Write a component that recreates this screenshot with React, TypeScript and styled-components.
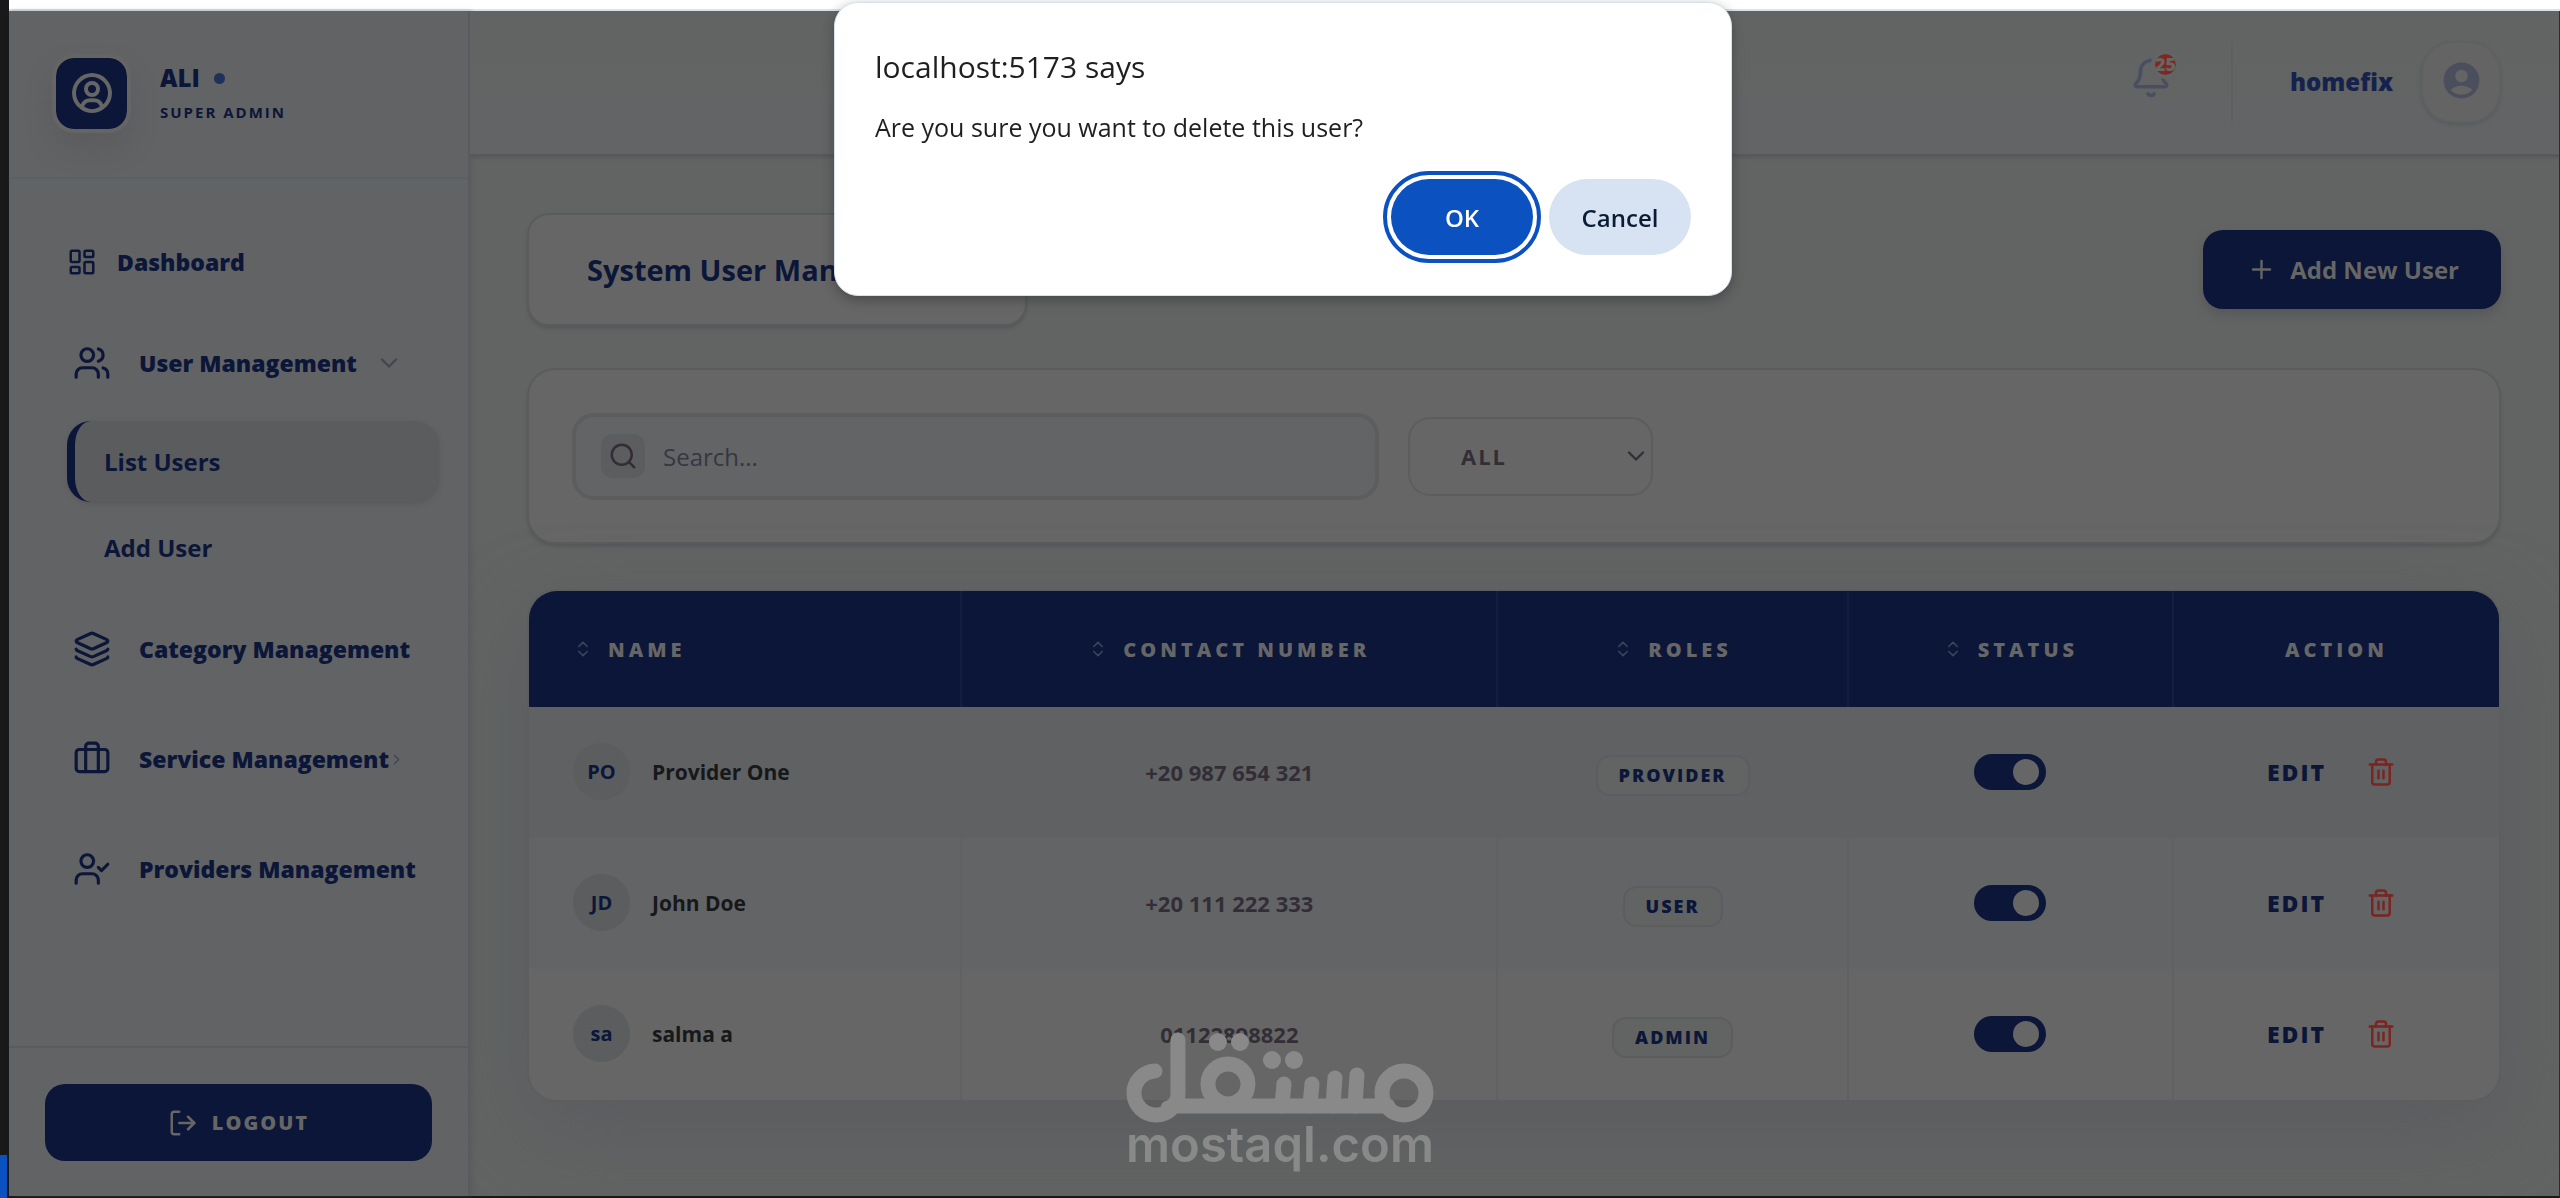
import React from "react";
import styled, { createGlobalStyle, css } from "styled-components";
import {
  Bell,
  Briefcase,
  ChevronDown,
  ChevronRight,
  ChevronsUpDown,
  Layers,
  LayoutDashboard,
  LogOut,
  Plus,
  Search,
  Trash2,
  UserCheck,
  Users,
} from "lucide-react";
import { BiUserCircle } from "react-icons/bi";
import { MdAccountCircle } from "react-icons/md";

const color = {
  navy: "#0b1638",
  paper: "#666666",
  sidebar: "#626365",
  page: "#626463",
  line: "#5a5b5d",
  soft: "#5c5d5f",
  ink: "#17181a",
  muted: "#332e36",
  danger: "#7a251f",
};

const GlobalStyle = createGlobalStyle`
  *, *::before, *::after { box-sizing: border-box; }
  body {
    margin: 0;
    background: ${color.page};
    color: ${color.navy};
    font-family: "Segoe UI", "Open Sans", sans-serif;
    font-size: 24px;
  }
  button, input, select { font: inherit; color: inherit; }
  h1, h2, p, ul { margin: 0; padding: 0; }
  ul { list-style: none; }
`;

/* ---------- window frame ---------- */

const Window = styled.div`
  display: grid;
  grid-template-columns: 9px minmax(0, 1fr);
  min-height: 100vh;
`;

const Edge = styled.div`
  display: flex;
  flex-direction: column;
  justify-content: flex-end;
  background: #191919;
`;

const EdgeAccent = styled.div`
  width: 7px;
  height: 43px;
  background: #0c51c0;
`;

const Viewport = styled.div`
  display: flex;
  flex-direction: column;
  background: #ffffff;
`;

const TopStrip = styled.div`
  height: 11px;
  border-bottom: 2px solid #d9e3ee;
`;

const Shell = styled.div`
  flex: 1;
  display: grid;
  grid-template-columns: 461px minmax(0, 1fr);
  background: ${color.page};
  border-right: 1px solid #2b2c2d;
  border-bottom: 2px solid #17181a;
`;

/* ---------- sidebar ---------- */

const Sidebar = styled.aside`
  display: flex;
  flex-direction: column;
  background: ${color.sidebar};
  border-right: 2px solid ${color.line};
  box-shadow: 2px 0 4px rgba(80, 81, 84, 0.4);
`;

const Brand = styled.div`
  display: flex;
  align-items: center;
  gap: 29px;
  height: 168px;
  padding: 0 43px 2px;
  border-bottom: 2px solid #5a6064;
`;

const BrandMark = styled.div`
  display: grid;
  place-items: center;
  width: 79px;
  height: 79px;
  border: 4px solid #666565;
  border-radius: 22px;
  background: ${color.navy};
  background-clip: padding-box;
  color: ${color.paper};
  box-shadow: 0 16px 24px rgba(82, 83, 86, 0.4);
`;

const BrandText = styled.div`
  display: flex;
  flex-direction: column;
  gap: 4px;
`;

const BrandName = styled.p`
  display: flex;
  align-items: center;
  gap: 14px;
  font-size: 24px;
  line-height: 34px;
  font-weight: 800;
`;

const OnlineDot = styled.span`
  width: 11px;
  height: 11px;
  border-radius: 50%;
  background: #1f3158;
`;

const BrandRole = styled.p`
  font-size: 15px;
  line-height: 26px;
  font-weight: 700;
  letter-spacing: 2px;
`;

const Nav = styled.nav`
  flex: 1;
  padding: 43px 29px 0 58px;
`;

const NavLink = styled.a<{ $compact?: boolean }>`
  display: flex;
  align-items: center;
  gap: ${(p) => (p.$compact ? 20 : 28)}px;
  height: ${(p) => (p.$compact ? 80 : 90)}px;
  margin-bottom: ${(p) => (p.$compact ? 16 : 20)}px;
  padding-left: ${(p) => (p.$compact ? 0 : 6)}px;
  color: ${color.navy};
  font-size: 23px;
  font-weight: 800;
  white-space: nowrap;
  text-decoration: none;
  svg { flex: none; }
`;

const Caret = styled.span<{ $tight?: boolean }>`
  display: flex;
  margin-left: ${(p) => (p.$tight ? -29 : -10)}px;
  color: #43464f;
`;

const SubList = styled.ul`
  display: grid;
  gap: 5px;
  margin: -7px 0 16px;
`;

const SubLink = styled.a<{ $active?: boolean }>`
  display: flex;
  align-items: center;
  height: 81px;
  padding-left: 29px;
  border-left: 8px solid transparent;
  border-radius: 24px;
  color: ${color.navy};
  font-size: 24px;
  font-weight: 700;
  text-decoration: none;
  ${(p) =>
    p.$active &&
    css`
      border-left-color: ${color.navy};
      background: #5b5c5e;
      box-shadow: 0 2px 4px rgba(80, 81, 84, 0.5);
    `}
`;

const SidebarFooter = styled.div`
  padding: 36px 36px 35px;
  border-top: 2px solid ${color.line};
`;

const LogoutButton = styled.button`
  display: flex;
  align-items: center;
  justify-content: center;
  gap: 14px;
  width: 100%;
  height: 77px;
  border: 0;
  border-radius: 20px;
  background: ${color.navy};
  color: ${color.paper};
  font-size: 20px;
  font-weight: 800;
  letter-spacing: 2px;
`;

/* ---------- top bar ---------- */

const Main = styled.main`
  display: flex;
  flex-direction: column;
  min-width: 0;
  overflow: hidden;
`;

const TopBar = styled.header`
  display: flex;
  align-items: center;
  justify-content: flex-end;
  height: 146px;
  padding: 0 58px 2px 0;
  border-bottom: 3px solid #58595b;
  background: linear-gradient(180deg, #626463, #636466);
  box-shadow: 0 1px 3px ${color.line};
`;

const BellButton = styled.button`
  position: relative;
  display: flex;
  margin-right: 59px;
  padding: 0 0 8px;
  border: 0;
  background: none;
  color: #4b4e60;
`;

const BellCount = styled.span`
  position: absolute;
  top: -7px;
  right: -8px;
  display: grid;
  place-items: center;
  width: 29px;
  height: 29px;
  border: 4px solid #636464;
  border-radius: 50%;
  background: #7f2820;
  background-clip: padding-box;
  color: ${color.paper};
  font-size: 18px;
  line-height: 20px;
  font-weight: 800;
`;

const Account = styled.div`
  display: flex;
  align-items: center;
  gap: 28px;
  height: 80px;
  padding-left: 57px;
  border-left: 2px solid #5e5f61;
  color: #15234c;
  font-size: 24px;
  font-weight: 800;
`;

const AccountButton = styled.button`
  display: grid;
  place-items: center;
  width: 80px;
  height: 82px;
  padding: 0 0 3px;
  border: 2px solid #5f6061;
  border-radius: 32px;
  background: #636463;
  color: #4b4e5c;
  box-shadow: 0 2px 3px rgba(80, 81, 84, 0.5);
`;

/* ---------- content ---------- */

const Content = styled.div`
  flex: 1;
  padding: 56px 58px 80px 57px;
`;

const TitleRow = styled.div`
  display: flex;
  align-items: center;
  justify-content: space-between;
  margin-bottom: 42px;
`;

const card = css`
  border: 2px solid ${color.line};
  background: ${color.paper};
  box-shadow: 0 3px 3px #58595b;
`;

const TitleCard = styled.div`
  ${card}
  display: flex;
  align-items: center;
  width: 500px;
  height: 113px;
  padding-left: 58px;
  border-radius: 22px;
  white-space: nowrap;
`;

const Title = styled.h1`
  font-size: 29px;
  line-height: 40px;
  font-weight: 700;
`;

const AddButton = styled.button`
  display: flex;
  align-items: center;
  gap: 14px;
  height: 79px;
  padding: 0 42px 0 44px;
  border: 0;
  border-radius: 20px;
  background: ${color.navy};
  color: ${color.paper};
  font-size: 24px;
  font-weight: 700;
  box-shadow: 0 6px 10px #57585a;
`;

const Filters = styled.form`
  ${card}
  display: flex;
  align-items: center;
  gap: 29px;
  height: 176px;
  margin-bottom: 45px;
  padding: 0 43px;
  border-radius: 28px;
`;

const SearchBox = styled.div`
  display: flex;
  align-items: center;
  gap: 18px;
  width: 807px;
  height: 87px;
  padding: 0 25px;
  border: 4px solid ${color.soft};
  border-radius: 22px;
  background: #636466;
`;

const SearchBadge = styled.label`
  display: grid;
  place-items: center;
  width: 44px;
  height: 44px;
  border-radius: 12px;
  background: #5c5d5f;
  color: ${color.muted};
`;

const SearchInput = styled.input`
  flex: 1;
  min-width: 0;
  padding: 0;
  border: 0;
  outline: 0;
  background: none;
  color: ${color.muted};
  font-size: 24px;
  &::placeholder { color: #363743; opacity: 1; }
`;

const RoleFilter = styled.div`
  display: grid;
  align-items: center;
  width: 245px;
  height: 79px;
  color: ${color.muted};
  > * { grid-area: 1 / 1; }
  svg { justify-self: end; margin-right: 3px; pointer-events: none; }
`;

const RoleSelect = styled.select`
  appearance: none;
  width: 100%;
  height: 100%;
  padding: 0 51px;
  border: 2px solid ${color.soft};
  border-radius: 22px;
  background: none;
  font-size: 22px;
  font-weight: 700;
  letter-spacing: 2px;
`;

/* ---------- users table ---------- */

const TableCard = styled.div`
  border: 2px solid #5d5e60;
  border-radius: 30px;
  overflow: hidden;
  background: ${color.paper};
  box-shadow: 0 28px 80px #5b5c60;
`;

const Table = styled.table`
  width: 100%;
  table-layout: fixed;
  border-collapse: separate;
  border-spacing: 0;
`;

const HeadCell = styled.th<{ $width: string }>`
  width: ${(p) => p.$width};
  height: 116px;
  padding: 0 44px;
  background: ${color.navy};
  color: ${color.paper};
  font-size: 20px;
  font-weight: 800;
  letter-spacing: 4px;
  & + & { border-left: 2px solid #131e3e; }
`;

const HeadLabel = styled.span<{ $start?: boolean }>`
  display: flex;
  align-items: center;
  justify-content: ${(p) => (p.$start ? "flex-start" : "center")};
  gap: 15px;
  svg { color: #38445c; }
`;

const Row = styled.tr<{ $tint: string }>`
  background: ${(p) => p.$tint};
  & + & td { border-top: 2px solid #606162; }
`;

const Cell = styled.td`
  height: 131px;
  padding: 0 44px 2px;
  text-align: center;
  & + & { border-left: 2px solid #606162; }
`;

const Person = styled.div`
  display: flex;
  align-items: center;
  gap: 22px;
  color: ${color.ink};
  font-size: 21px;
  font-weight: 700;
`;

const Initials = styled.span`
  display: grid;
  place-items: center;
  width: 57px;
  height: 57px;
  border-radius: 50%;
  background: #5b5d5f;
  color: ${color.navy};
  font-size: 20px;
  font-weight: 700;
`;

const Phone = styled.span`
  color: ${color.muted};
  font-size: 22px;
  font-weight: 700;
`;

const RoleTag = styled.span`
  display: inline-block;
  margin-top: 7px;
  padding: 0 21px;
  border: 2px solid ${color.soft};
  border-radius: 14px;
  background: ${color.page};
  font-size: 18px;
  line-height: 37px;
  font-weight: 800;
  letter-spacing: 2px;
`;

const Toggle = styled.input`
  appearance: none;
  display: inline-flex;
  align-items: center;
  width: 72px;
  height: 36px;
  margin: 0;
  padding: 0 7px;
  border-radius: 18px;
  background: #4c4d50;
  vertical-align: middle;
  &::before {
    content: "";
    width: 26px;
    height: 26px;
    border-radius: 50%;
    background: ${color.paper};
  }
  &:checked { justify-content: flex-end; background: ${color.navy}; }
`;

const Actions = styled.div`
  display: flex;
  align-items: center;
  justify-content: center;
  gap: 30px;
`;

const EditButton = styled.button`
  padding: 0;
  border: 0;
  background: none;
  font-size: 23px;
  font-weight: 800;
  letter-spacing: 2px;
`;

const DeleteButton = styled.button`
  display: flex;
  padding: 10px;
  border: 0;
  background: none;
  color: ${color.danger};
`;

/* ---------- confirm dialog ---------- */

const Confirm = styled.div`
  position: fixed;
  top: 2px;
  left: calc(50% + 3px);
  transform: translateX(-50%);
  width: 898px;
  padding: 44px 40px 40px;
  border: 1px solid #d5e1ef;
  border-radius: 24px;
  background: #ffffff;
  color: #1f1f1f;
  box-shadow: 0 4px 12px rgba(40, 41, 44, 0.45);
`;

const ConfirmTitle = styled.h2`
  margin-bottom: 22px;
  font-size: 30px;
  line-height: 40px;
  font-weight: 500;
`;

const ConfirmText = styled.p`
  margin-bottom: 34px;
  font-size: 25px;
  line-height: 36px;
`;

const ConfirmButtons = styled.div`
  display: flex;
  justify-content: flex-end;
  gap: 16px;
`;

const ConfirmButton = styled.button<{ $primary?: boolean }>`
  width: 142px;
  height: 76px;
  padding: 0;
  border: 0;
  border-radius: 38px;
  background: ${(p) => (p.$primary ? "#0c51c0" : "#d7e3f2")};
  color: ${(p) => (p.$primary ? "#ffffff" : "#0a1d35")};
  font-size: 24px;
  font-weight: 600;
  ${(p) =>
    p.$primary &&
    css`
      outline: 4px solid #0c51c0;
      outline-offset: 4px;
    `}
`;

/* ---------- watermark ---------- */

const Watermark = styled.div`
  position: fixed;
  left: 50%;
  bottom: 28px;
  transform: translateX(-50%);
  display: flex;
  flex-direction: column;
  align-items: center;
  color: #898989;
  font-family: Inter, sans-serif;
  font-size: 49px;
  line-height: 50px;
  font-weight: 600;
  pointer-events: none;
  svg { overflow: visible; }
`;

const WatermarkLogo = () => (
  <svg width="308" height="88" viewBox="0 0 308 88" fill="none" stroke="#898989" strokeWidth="15" strokeLinecap="round">
    <path d="M29 39 A22 22 0 1 0 52 61 V8 M52 61 Q52 74 42 76 M46 74 H262" />
    <circle cx="102" cy="52" r="20" />
    <path d="M156 74 L158 52 M184 74 L186 52 M207 74 L209 46 M229 74 L231 43" />
    <circle cx="278" cy="61" r="22" />
    <g fill="#898989" stroke="none">
      <circle cx="92" cy="10" r="9" />
      <circle cx="114" cy="10" r="9" />
      <circle cx="146" cy="28" r="9" />
      <circle cx="168" cy="28" r="9" />
    </g>
  </svg>
);

/* ---------- data ---------- */

const columns = [
  { label: "NAME", width: "21.9%", sortable: true, start: true },
  { label: "CONTACT NUMBER", width: "27.2%", sortable: true },
  { label: "ROLES", width: "17.8%", sortable: true },
  { label: "STATUS", width: "16.5%", sortable: true },
  { label: "ACTION", width: "16.6%", sortable: false },
];

const users = [
  { initials: "PO", name: "Provider One", phone: "+20 987 654 321", role: "PROVIDER", tint: "#606163" },
  { initials: "JD", name: "John Doe", phone: "+20 111 222 333", role: "USER", tint: "#636466" },
  { initials: "sa", name: "salma a", phone: "01122898822", role: "ADMIN", tint: "#666666" },
];

export default function App() {
  return (
    <>
      <GlobalStyle />
      <Window>
        <Edge>
          <EdgeAccent />
        </Edge>
        <Viewport>
          <TopStrip />
          <Shell>
            <Sidebar>
              <Brand>
                <BrandMark>
                  <BiUserCircle size={48} />
                </BrandMark>
                <BrandText>
                  <BrandName>
                    ALI <OnlineDot />
                  </BrandName>
                  <BrandRole>SUPER ADMIN</BrandRole>
                </BrandText>
              </Brand>
              <Nav>
                <NavLink href="#dashboard" $compact>
                  <LayoutDashboard size={30} />
                  Dashboard
                </NavLink>
                <NavLink href="#users">
                  <Users size={38} />
                  User Management
                  <Caret>
                    <ChevronDown size={28} />
                  </Caret>
                </NavLink>
                <SubList>
                  <li>
                    <SubLink href="#list-users" $active>
                      List Users
                    </SubLink>
                  </li>
                  <li>
                    <SubLink href="#add-user">Add User</SubLink>
                  </li>
                </SubList>
                <NavLink href="#categories">
                  <Layers size={38} />
                  Category Management
                </NavLink>
                <NavLink href="#services">
                  <Briefcase size={38} />
                  Service Management
                  <Caret $tight>
                    <ChevronRight size={17} />
                  </Caret>
                </NavLink>
                <NavLink href="#providers">
                  <UserCheck size={38} />
                  Providers Management
                </NavLink>
              </Nav>
              <SidebarFooter>
                <LogoutButton type="button">
                  <LogOut size={30} />
                  LOGOUT
                </LogoutButton>
              </SidebarFooter>
            </Sidebar>

            <Main>
              <TopBar>
                <BellButton type="button" aria-label="Notifications">
                  <Bell size={42} />
                  <BellCount>25</BellCount>
                </BellButton>
                <Account>
                  homefix
                  <AccountButton type="button" aria-label="Account">
                    <MdAccountCircle size={43} />
                  </AccountButton>
                </Account>
              </TopBar>

              <Content>
                <TitleRow>
                  <TitleCard>
                    <Title>System User Management</Title>
                  </TitleCard>
                  <AddButton type="button">
                    <Plus size={29} />
                    Add New User
                  </AddButton>
                </TitleRow>

                <Filters>
                  <SearchBox>
                    <SearchBadge htmlFor="user-search" aria-label="Search users">
                      <Search size={30} />
                    </SearchBadge>
                    <SearchInput id="user-search" type="text" placeholder="Search..." />
                  </SearchBox>
                  <RoleFilter>
                    <RoleSelect aria-label="Role" defaultValue="ALL">
                      <option>ALL</option>
                      <option>ADMIN</option>
                      <option>PROVIDER</option>
                      <option>USER</option>
                    </RoleSelect>
                    <ChevronDown size={28} />
                  </RoleFilter>
                </Filters>

                <TableCard>
                  <Table>
                    <thead>
                      <tr>
                        {columns.map((c) => (
                          <HeadCell key={c.label} $width={c.width} scope="col">
                            <HeadLabel $start={c.start}>
                              {c.sortable && <ChevronsUpDown size={20} />}
                              {c.label}
                            </HeadLabel>
                          </HeadCell>
                        ))}
                      </tr>
                    </thead>
                    <tbody>
                      {users.map((u) => (
                        <Row key={u.name} $tint={u.tint}>
                          <Cell>
                            <Person>
                              <Initials>{u.initials}</Initials>
                              {u.name}
                            </Person>
                          </Cell>
                          <Cell>
                            <Phone>{u.phone}</Phone>
                          </Cell>
                          <Cell>
                            <RoleTag>{u.role}</RoleTag>
                          </Cell>
                          <Cell>
                            <Toggle type="checkbox" role="switch" defaultChecked aria-label={`${u.name} active`} />
                          </Cell>
                          <Cell>
                            <Actions>
                              <EditButton type="button">EDIT</EditButton>
                              <DeleteButton type="button" aria-label={`Delete ${u.name}`}>
                                <Trash2 size={30} />
                              </DeleteButton>
                            </Actions>
                          </Cell>
                        </Row>
                      ))}
                    </tbody>
                  </Table>
                </TableCard>
              </Content>
            </Main>
          </Shell>
        </Viewport>
      </Window>

      <Confirm role="alertdialog" aria-labelledby="confirm-title" aria-describedby="confirm-text">
        <ConfirmTitle id="confirm-title">localhost:5173 says</ConfirmTitle>
        <ConfirmText id="confirm-text">Are you sure you want to delete this user?</ConfirmText>
        <ConfirmButtons>
          <ConfirmButton type="button" $primary>
            OK
          </ConfirmButton>
          <ConfirmButton type="button">Cancel</ConfirmButton>
        </ConfirmButtons>
      </Confirm>

      <Watermark>
        <WatermarkLogo />
        mostaql.com
      </Watermark>
    </>
  );
}
